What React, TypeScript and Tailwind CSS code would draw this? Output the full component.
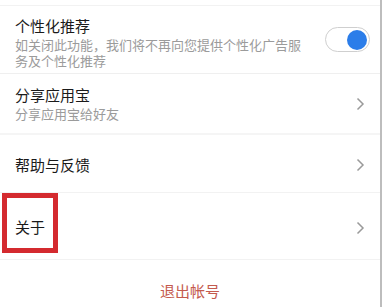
import React from 'react';

const font = { fontFamily: '"Noto Sans CJK SC", "Noto Sans", sans-serif' };

const Chevron = () => (
  <svg width="9" height="14" viewBox="0 0 9 14" className="shrink-0">
    <path d="M1.5 1.5 L7 7 L1.5 12.5" fill="none" stroke="#9a9a9a" strokeWidth="1.5" />
  </svg>
);

const Toggle = () => (
  <div className="flex h-[25px] w-[45px] items-center justify-end rounded-full border border-[#cfcfcf] bg-white pr-[2px]">
    <div className="h-[20px] w-[20px] rounded-full bg-[#2b7de9]" />
  </div>
);

const App = () => {
  return (
    <div className="h-[307px] w-[384px] overflow-hidden bg-white" style={font}>
      <div className="h-full w-[382px] border-r-2 border-[#bdbdbd]">
        <div className="h-[6px] border-b border-[#f2f2f2]" />
        <div className="flex h-[68px] items-center justify-between border-b border-[#efefef] pl-[15px] pr-[10px]">
          <div className="flex flex-col pt-[4px]">
            <p className="text-[15px] leading-[22px] text-[#1a1a1a]">个性化推荐</p>
            <p className="w-[290px] text-[13px] leading-[16px] text-[#9b9b9b]">
              如关闭此功能，我们将不再向您提供个性化广告服务及个性化推荐
            </p>
          </div>
          <Toggle />
        </div>
        <div className="flex h-[61px] items-center justify-between border-b-2 border-[#f5f5f5] pl-[15px] pr-[15px]">
          <div className="flex flex-col">
            <p className="text-[15px] leading-[20px] text-[#1a1a1a]">分享应用宝</p>
            <p className="text-[13px] leading-[17px] text-[#9b9b9b]">分享应用宝给好友</p>
          </div>
          <Chevron />
        </div>
        <div className="flex h-[58px] items-center justify-between border-b border-[#f2f2f2] pl-[15px] pr-[15px] pt-[3px]">
          <p className="text-[15px] text-[#1a1a1a]">帮助与反馈</p>
          <Chevron />
        </div>
        <div className="relative flex h-[67px] items-center justify-between border-b border-[#f2f2f2] pl-[15px] pr-[15px] pt-[3px]">
          <p className="text-[15px] text-[#1a1a1a]">关于</p>
          <Chevron />
          <div className="absolute left-[2px] top-[0px] h-[60px] w-[56px] border-[5px] border-[#d42a2f]" />
        </div>
        <div className="flex h-[47px] justify-center pt-[20px]">
          <p className="text-[15px] leading-[22px] text-[#c45a4e]">退出帐号</p>
        </div>
      </div>
    </div>
  );
};

export default App;
